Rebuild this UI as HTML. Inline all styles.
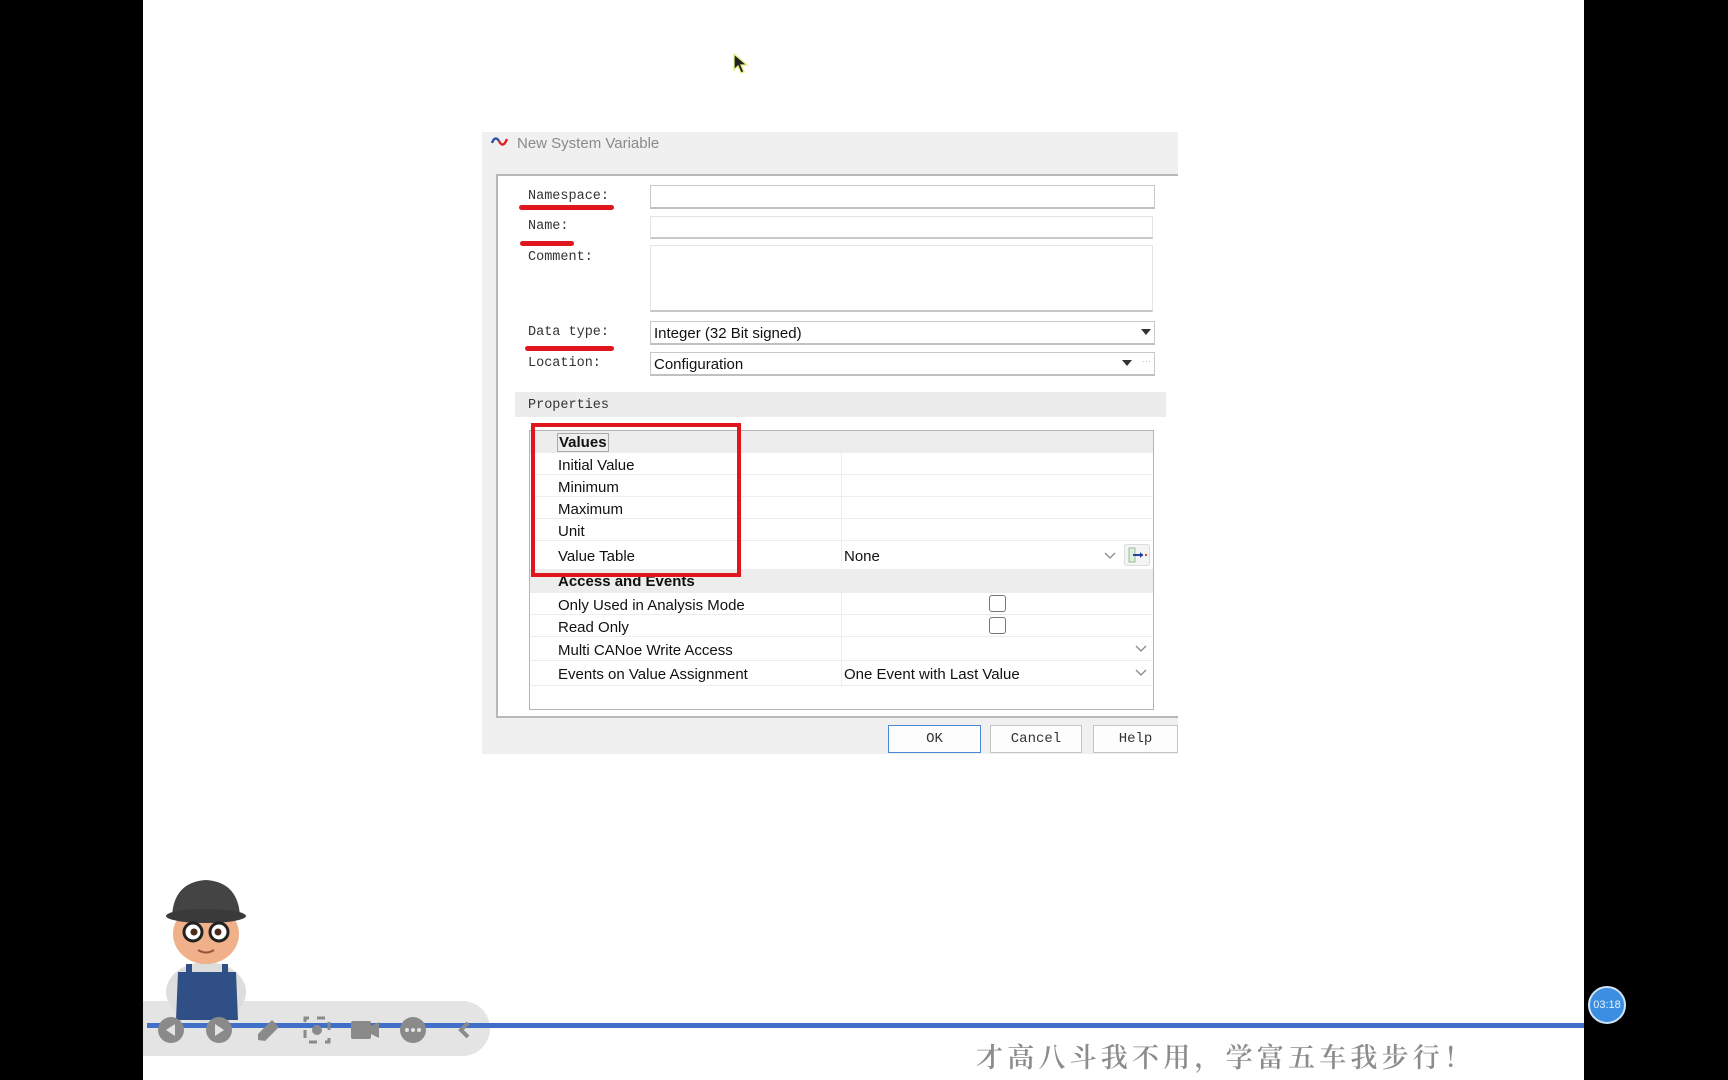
<!DOCTYPE html>
<html><head><meta charset="utf-8">
<style>
*{box-sizing:border-box;margin:0;padding:0}
body{width:1728px;height:1080px;background:#000;position:relative;overflow:hidden;font-family:"Liberation Sans",sans-serif}
.abs{position:absolute}
#page{left:143px;top:0;width:1441px;height:1080px;background:#fff}
.dlg{left:482px;top:132px;width:696px;height:622px;background:#f0f0f0}
.title{left:517px;top:135px;font-size:15px;color:#8a8a8a}
.panel{left:496px;top:174px;width:682px;height:544px;border-top:2px solid #b8b8b8;border-left:2px solid #b8b8b8;border-bottom:2px solid #b8b8b8;background:#fff}
.lbl{font-family:"Liberation Mono",monospace;font-size:13.5px;color:#333}
.inp{background:#fff;border:1px solid #c8c8c8;border-bottom:2px solid #c0c0c0}
.red{background:#e0161e;height:5px;border-radius:3px}
.txt{font-size:15px;color:#111}
.row{left:531px;width:622px;border-bottom:1px solid #ececec}
.btn{top:725px;height:28px;border:1px solid #c4c4c4;background:#fdfdfd;font-family:"Liberation Mono",monospace;font-size:14px;color:#333;text-align:center;line-height:26px}
.cb{width:17px;height:17px;border:1.5px solid #777;border-radius:3px;background:#fff}
.chev{width:12px;height:8px}
</style></head><body>
<div id="page" class="abs"></div>

<svg class="abs" style="left:733px;top:53px" width="16" height="22" viewBox="0 0 16 22"><path d="M1 1 L1 17 L5 13 L8 20 L11 19 L8 12 L14 12 Z" fill="#222" stroke="#e8f080" stroke-width="1.3"/></svg>

<div class="abs dlg"></div>
<svg class="abs" style="left:490px;top:135px" width="20" height="14" viewBox="0 0 20 14"><path d="M2 8 Q5 0 9 6" stroke="#2a4fa8" stroke-width="2.4" fill="none"/><path d="M9 6 Q13 14 17 4" stroke="#d22" stroke-width="2.4" fill="none"/></svg>
<div class="abs title">New System Variable</div>
<div class="abs panel"></div>

<div class="abs lbl" style="left:528px;top:189px">Namespace:</div>
<div class="abs lbl" style="left:528px;top:219px">Name:</div>
<div class="abs lbl" style="left:528px;top:250px">Comment:</div>
<div class="abs lbl" style="left:528px;top:325px">Data type:</div>
<div class="abs lbl" style="left:528px;top:356px">Location:</div>
<div class="abs red" style="left:519px;top:205px;width:95px"></div>
<div class="abs red" style="left:520px;top:241px;width:54px"></div>
<div class="abs red" style="left:525px;top:346px;width:89px"></div>

<div class="abs inp" style="left:650px;top:185px;width:505px;height:24px"></div>
<div class="abs inp" style="left:650px;top:216px;width:503px;height:23px;border-color:#e4e4e4;border-bottom-color:#c8c8c8"></div>
<div class="abs inp" style="left:650px;top:245px;width:503px;height:67px;border-color:#e4e4e4;border-bottom-color:#c8c8c8"></div>
<div class="abs inp" style="left:650px;top:321px;width:505px;height:24px"></div>
<div class="abs txt" style="left:654px;top:325px">Integer (32 Bit signed)</div>
<div class="abs" style="left:1141px;top:329px;border-left:5px solid transparent;border-right:5px solid transparent;border-top:6px solid #333"></div>
<div class="abs inp" style="left:650px;top:352px;width:505px;height:24px"></div>
<div class="abs txt" style="left:654px;top:356px">Configuration</div>
<div class="abs" style="left:1122px;top:360px;border-left:5px solid transparent;border-right:5px solid transparent;border-top:6px solid #333"></div>
<div class="abs" style="left:1142px;top:356px;font-size:9px;color:#bbb">···</div>

<div class="abs" style="left:515px;top:392px;width:651px;height:25px;background:#ececec"></div>
<div class="abs lbl" style="left:528px;top:398px">Properties</div>

<div class="abs" style="left:529px;top:430px;width:625px;height:280px;border:1px solid #b4b4b4;background:#fff"></div>
<div class="abs" style="left:530px;top:431px;width:623px;height:22px;background:#ededed"></div>
<div class="abs" style="left:530px;top:569px;width:623px;height:24px;background:#ededed"></div>
<div class="abs" style="left:841px;top:453px;width:1px;height:232px;background:#ececec"></div>
<div class="abs row" style="top:453px;height:22px"></div>
<div class="abs row" style="top:475px;height:22px"></div>
<div class="abs row" style="top:497px;height:22px"></div>
<div class="abs row" style="top:519px;height:22px"></div>
<div class="abs row" style="top:593px;height:22px"></div>
<div class="abs row" style="top:615px;height:22px"></div>
<div class="abs row" style="top:637px;height:24px"></div>
<div class="abs row" style="top:661px;height:25px"></div>

<div class="abs txt" style="left:557px;top:433px;font-weight:bold;border:1px solid #aaa;padding:0 1px">Values</div>
<div class="abs txt" style="left:558px;top:457px">Initial Value</div>
<div class="abs txt" style="left:558px;top:479px">Minimum</div>
<div class="abs txt" style="left:558px;top:501px">Maximum</div>
<div class="abs txt" style="left:558px;top:523px">Unit</div>
<div class="abs txt" style="left:558px;top:548px">Value Table</div>
<div class="abs txt" style="left:844px;top:548px">None</div>
<svg class="abs chev" style="left:1104px;top:552px" viewBox="0 0 12 8"><path d="M1 1 L6 6 L11 1" stroke="#888" stroke-width="1.3" fill="none"/></svg>
<svg class="abs" style="left:1124px;top:544px" width="26" height="22" viewBox="0 0 26 22"><rect x="0.5" y="0.5" width="25" height="21" rx="2" fill="#f4f4f4" stroke="#ddd"/><rect x="5" y="4" width="6" height="14" fill="#dfeede" stroke="#9b9"/><path d="M9 11 H19" stroke="#2344a0" stroke-width="2"/><path d="M16 8 L19 11 L16 14" fill="#2344a0"/><circle cx="22" cy="11" r="1.2" fill="#d44"/></svg>
<div class="abs txt" style="left:558px;top:573px;font-weight:bold">Access and Events</div>
<div class="abs txt" style="left:558px;top:597px">Only Used in Analysis Mode</div>
<div class="abs txt" style="left:558px;top:619px">Read Only</div>
<div class="abs txt" style="left:558px;top:642px">Multi CANoe Write Access</div>
<div class="abs txt" style="left:558px;top:666px">Events on Value Assignment</div>
<div class="abs txt" style="left:844px;top:666px">One Event with Last Value</div>
<div class="abs cb" style="left:989px;top:595px"></div>
<div class="abs cb" style="left:989px;top:617px"></div>
<svg class="abs chev" style="left:1135px;top:645px" viewBox="0 0 12 8"><path d="M1 1 L6 6 L11 1" stroke="#888" stroke-width="1.3" fill="none"/></svg>
<svg class="abs chev" style="left:1135px;top:669px" viewBox="0 0 12 8"><path d="M1 1 L6 6 L11 1" stroke="#888" stroke-width="1.3" fill="none"/></svg>

<div class="abs" style="left:531px;top:423px;width:210px;height:154px;border:4px solid #e0161e"></div>

<div class="abs btn" style="left:888px;width:93px;border:1.5px solid #4a8ad4">OK</div>
<div class="abs btn" style="left:990px;width:92px">Cancel</div>
<div class="abs btn" style="left:1093px;width:85px">Help</div>

<div class="abs" style="left:143px;top:1001px;width:347px;height:55px;background:#e4e4e4;border-radius:0 28px 28px 0"></div>
<div class="abs" style="left:147px;top:1023px;width:1437px;height:5px;background:#3f6fc6"></div>

<svg class="abs" style="left:150px;top:872px" width="112" height="150" viewBox="0 0 112 150">
<ellipse cx="56" cy="120" rx="40" ry="30" fill="#ddd"/>
<path d="M28 100 H86 L88 148 H26 Z" fill="#2f4f86"/>
<rect x="36" y="92" width="6" height="22" fill="#2f4f86"/><rect x="72" y="92" width="6" height="22" fill="#2f4f86"/>
<ellipse cx="56" cy="62" rx="33" ry="30" fill="#f0b08a"/>
<path d="M22 44 Q24 10 56 8 Q88 10 90 44 Z" fill="#444"/>
<ellipse cx="56" cy="44" rx="40" ry="7" fill="#3a3a3a"/>
<circle cx="43" cy="60" r="9" fill="#fff" stroke="#222" stroke-width="3"/><circle cx="69" cy="60" r="9" fill="#fff" stroke="#222" stroke-width="3"/>
<circle cx="44" cy="60" r="3.5" fill="#4a2a1a"/><circle cx="68" cy="60" r="3.5" fill="#4a2a1a"/>
<path d="M48 78 Q56 83 64 78" stroke="#a05040" stroke-width="2" fill="none"/>
</svg>

<svg class="abs" style="left:155px;top:1013px" width="320" height="34" viewBox="0 0 320 34">
<g fill="#8a8a8a">
<circle cx="16" cy="17" r="13"/><path d="M20 11 L11 17 L20 23 Z" fill="#e4e4e4"/>
<circle cx="64" cy="17" r="13"/><path d="M60 11 L69 17 L60 23 Z" fill="#e4e4e4"/>
<path d="M103 27 L103 21 L117 7 L124 14 L110 28 Z"/>
<rect x="150" y="5" width="24" height="24" fill="none" stroke="#8a8a8a" stroke-width="3" stroke-dasharray="8 8" stroke-dashoffset="4"/><circle cx="162" cy="17" r="5"/>
<rect x="196" y="8" width="20" height="18" rx="2"/><path d="M216 13 L224 9 L224 25 L216 21 Z"/>
<circle cx="258" cy="17" r="13"/><circle cx="252" cy="17" r="2" fill="#e4e4e4"/><circle cx="258" cy="17" r="2" fill="#e4e4e4"/><circle cx="264" cy="17" r="2" fill="#e4e4e4"/>
<path d="M313 10 L306 17 L313 24" stroke="#8a8a8a" stroke-width="4" fill="none"/>
</g></svg>

<div class="abs" style="left:1588px;top:986px;width:38px;height:38px;border-radius:50%;background:#3b8ee0;border:2px solid #cfe3f8;color:#e8f2ff;font-size:11px;text-align:center;line-height:34px">03:18</div>

<div class="abs" style="left:976px;top:1036px;font-family:'Noto Serif CJK SC',serif;font-weight:600;font-size:27px;letter-spacing:4.2px;color:#8c8c8c;white-space:nowrap">才高八斗我不用，学富五车我步行！</div>
</body></html>
